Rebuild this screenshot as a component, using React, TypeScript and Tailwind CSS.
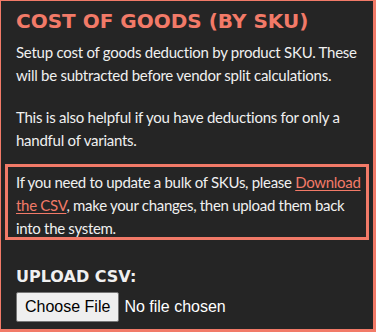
import React from "react";

export default function App() {
  return (
    <div className="w-[376px] h-[332px] bg-[#252525] border-t border-l border-r-[3px] border-b-[3px] border-[#f27a68] px-[15px] pt-[5px] text-[#f0f0f0] font-['Lato','Liberation_Sans',sans-serif] overflow-hidden">
      <h2 className="text-[#f27a68] text-[20px] font-bold leading-[30px] font-['DejaVu_Sans','Liberation_Sans',sans-serif]">
        COST OF GOODS (BY SKU)
      </h2>
      <p className="text-[15px] tracking-[-0.25px] leading-[23px] mt-[5px]">
        Setup cost of goods deduction by product SKU. These will be subtracted before vendor split calculations.
      </p>
      <p className="text-[15px] tracking-[-0.25px] leading-[23px] mt-[19px]">
        This is also helpful if you have deductions for only a handful of variants.
      </p>
      <div className="-ml-[11px] -mr-[11px] mt-[12px] border-[3px] border-[#f27a68] pl-[8px] pr-0 pt-[4px]">
        <p className="text-[15px] tracking-[-0.3px] leading-[23px] -mb-[3px] -mr-[2px]">
          If you need to update a bulk of SKUs, please{" "}
          <a href="#" className="text-[#f27a68] underline underline-offset-2">
            Download
            <br />
            the CSV
          </a>
          , make your changes, then upload them back
          <br />
          into the system.
        </p>
      </div>
      <h3 className="mt-[25px] text-[16px] font-bold leading-[24px] font-['DejaVu_Sans','Liberation_Sans',sans-serif]">
        UPLOAD CSV:
      </h3>
      <input
        type="file"
        className="block mt-[3px] text-[16px] font-['Liberation_Sans',sans-serif] text-white file:bg-[#efefef] file:text-black file:border file:border-[#767676] file:rounded-[2px] file:px-[8px] file:py-[2px] file:mr-[5px]"
      />
    </div>
  );
}
